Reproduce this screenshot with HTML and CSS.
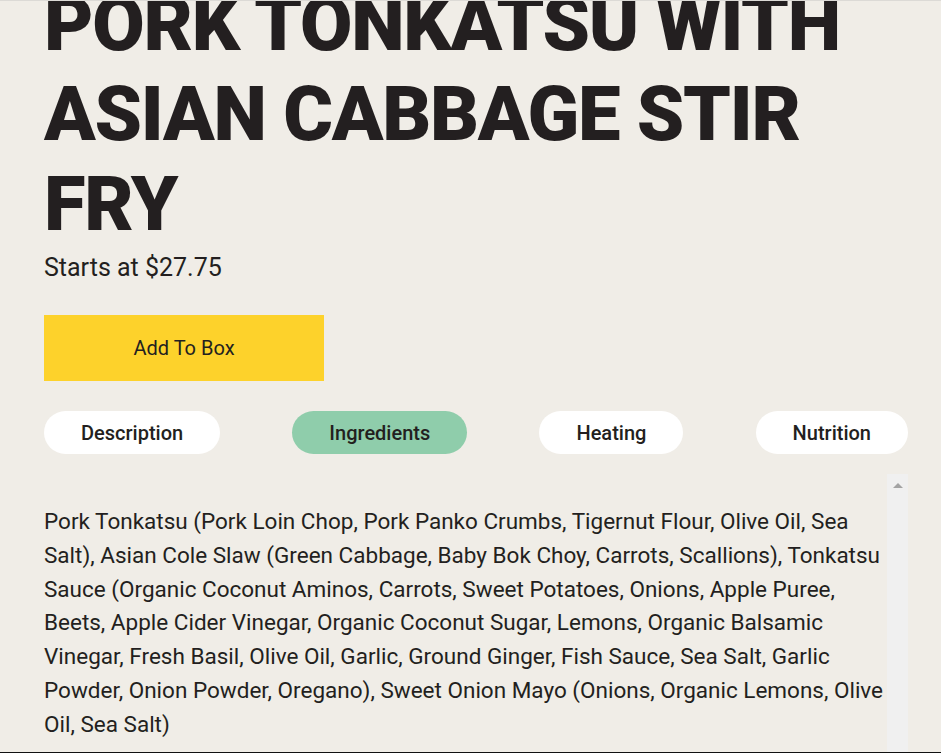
FILE: index.html
```html
<!DOCTYPE html>
<html lang="en">
<head>
<meta charset="utf-8">
<title>Pork Tonkatsu with Asian Cabbage Stir Fry</title>
<link rel="stylesheet" href="styles.css">
</head>
<body>
<div class="page">
  <main class="product">
    <h1 class="title">PORK TONKATSU WITH ASIAN CABBAGE STIR FRY</h1>
    <p class="price">Starts at $27.75</p>
    <button class="add-btn" type="button">Add To Box</button>
    <nav class="tabs">
      <button class="tab" type="button">Description</button>
      <button class="tab tab-active" type="button">Ingredients</button>
      <button class="tab" type="button">Heating</button>
      <button class="tab" type="button">Nutrition</button>
    </nav>
    <section class="panel">
      <p class="panel-text">Pork Tonkatsu (Pork Loin Chop, Pork Panko Crumbs, Tigernut Flour, Olive Oil, Sea Salt), Asian Cole Slaw (Green Cabbage, Baby Bok Choy, Carrots, Scallions), Tonkatsu Sauce (Organic Coconut Aminos, Carrots, Sweet Potatoes, Onions, Apple Puree, Beets, Apple Cider Vinegar, Organic Coconut Sugar, Lemons, Organic Balsamic Vinegar, Fresh Basil, Olive Oil, Garlic, Ground Ginger, Fish Sauce, Sea Salt, Garlic Powder, Onion Powder, Oregano), Sweet Onion Mayo (Onions, Organic Lemons, Olive Oil, Sea Salt)</p>
      <div class="scrollbar" aria-hidden="true"><span class="scroll-arrow"></span></div>
    </section>
  </main>
</div>
</body>
</html>
```
FILE: styles.css
```css
* { box-sizing: border-box; }
html, body { margin: 0; padding: 0; }
body {
  background: #f0ede7;
  color: #231f20;
  font-family: Roboto, "Liberation Sans", Arial, sans-serif;
}
.page {
  height: 753px;
  overflow: hidden;
  border-top: 1px solid #dcdad6;
  border-bottom: 1px solid #111;
}
.product {
  padding: 0 33px 0 44px;
}
.title {
  margin: -22px 0 0;
  font-family: Roboto, "Liberation Sans", sans-serif;
  font-weight: 900;
  font-size: 76px;
  line-height: 90px;
  letter-spacing: -1.3px;
  color: #231f20;
}
.price {
  margin: 5px 0 0;
  font-size: 25px;
  font-weight: 400;
  line-height: 28px;
}
.add-btn {
  display: block;
  margin-top: 33px;
  width: 280px;
  height: 66px;
  border: 0;
  background: #fdd22b;
  color: #231f20;
  font-family: inherit;
  font-size: 20px;
  font-weight: 400;
}
.tabs {
  margin-top: 30px;
  display: flex;
  justify-content: space-between;
}
.tab {
  height: 43px;
  padding: 0 37px;
  border: 0;
  border-radius: 22px;
  background: #fff;
  color: #231f20;
  font-family: inherit;
  font-size: 20px;
  font-weight: 500;
}
.tab-active { background: #8fcdab; }
.panel {
  margin-top: 20px;
  display: flex;
  align-items: flex-start;
  height: 300px;
}
.panel-text {
  flex: 1;
  margin: 0;
  padding: 31px 0 0;
  font-size: 22.5px;
  line-height: 33.8px;
}
.scrollbar {
  width: 21px;
  height: 100%;
  background: #f0f0f0;
  display: flex;
  justify-content: center;
  padding-top: 9px;
}
.scroll-arrow {
  width: 0;
  height: 0;
  border-left: 5px solid transparent;
  border-right: 5px solid transparent;
  border-bottom: 5px solid #a3a3a3;
}
```
